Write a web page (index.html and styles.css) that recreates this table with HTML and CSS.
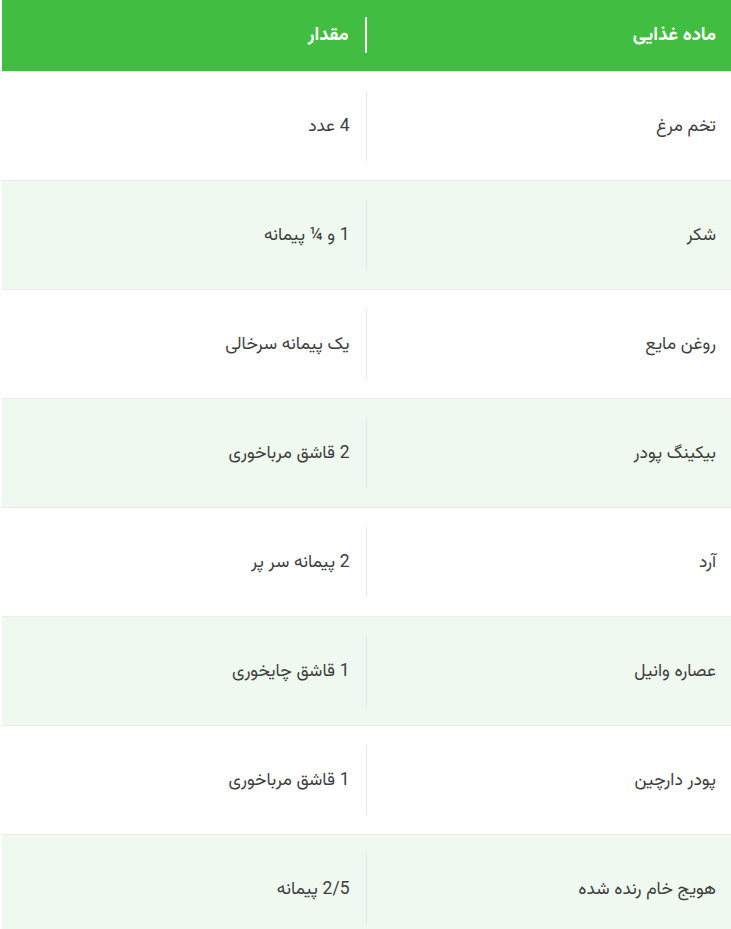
FILE: index.html
```html
<!DOCTYPE html>
<html lang="fa" dir="rtl">
<head>
<meta charset="utf-8">
<link rel="stylesheet" href="styles.css">
</head>
<body>
<div class="table">
  <div class="row head">
    <div class="cell name">ماده غذایی</div>
    <div class="cell qty">مقدار</div>
  </div>
  <div class="row">
    <div class="cell name">تخم مرغ</div>
    <div class="cell qty">4 عدد</div>
  </div>
  <div class="row alt">
    <div class="cell name">شکر</div>
    <div class="cell qty">1 و ¼ پیمانه</div>
  </div>
  <div class="row">
    <div class="cell name">روغن مایع</div>
    <div class="cell qty">یک پیمانه سرخالی</div>
  </div>
  <div class="row alt">
    <div class="cell name">بیکینگ پودر</div>
    <div class="cell qty">2 قاشق مرباخوری</div>
  </div>
  <div class="row">
    <div class="cell name">آرد</div>
    <div class="cell qty">2 پیمانه سر پر</div>
  </div>
  <div class="row alt">
    <div class="cell name">عصاره وانیل</div>
    <div class="cell qty">1 قاشق چایخوری</div>
  </div>
  <div class="row">
    <div class="cell name">پودر دارچین</div>
    <div class="cell qty">1 قاشق مرباخوری</div>
  </div>
  <div class="row alt">
    <div class="cell name">هویج خام رنده شده</div>
    <div class="cell qty">2/5 پیمانه</div>
  </div>
</div>
</body>
</html>
```
FILE: styles.css
```css
html, body {
  margin: 0;
  padding: 0;
  background: #ffffff;
}
body {
  padding-left: 2px;
  font-family: "Vazirmatn", "Noto Sans Arabic", "DejaVu Sans", sans-serif;
  color: #3e3e3e;
}
.table {
  display: flex;
  flex-direction: column;
}
.row {
  display: grid;
  grid-template-columns: 1fr 1fr;
  padding: 19px 0;
  border-top: 1px solid #ebebeb;
  background: #ffffff;
}
.row.alt {
  background: #eff9f0;
}
.row.head {
  background: #41bd41;
  padding: 17px 0 18px;
  border-top: none;
  color: #ffffff;
  font-weight: bold;
}
.cell {
  display: flex;
  align-items: center;
  height: 70px;
  font-size: 17.5px;
}
.head .cell {
  height: 36px;
  font-size: 18.5px;
}
.cell.name {
  padding-right: 15px;
}
.cell.qty {
  padding-right: 16px;
  border-right: 1px solid #e6e6e6;
}
.head .cell.qty {
  border-right: 2px solid #ffffff;
}
```
